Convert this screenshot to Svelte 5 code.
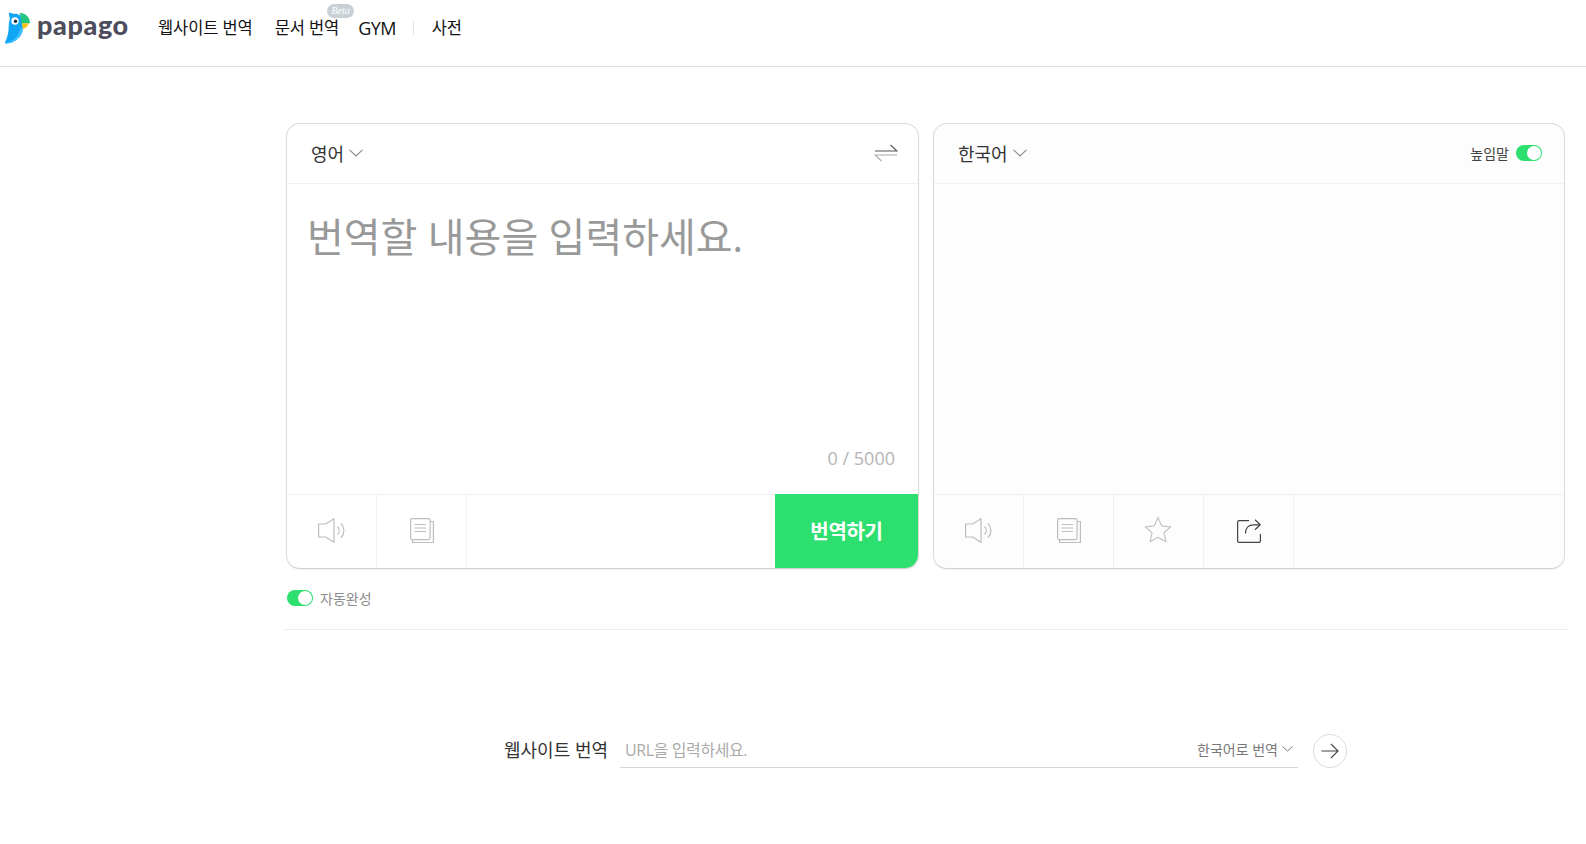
<script>
  const leftTools = ['speaker', 'copy'];
</script>

{#snippet speaker()}
  <svg class="icon" width="29" height="25" viewBox="0 0 29 25" fill="none" stroke="#bdbdbd" stroke-width="1.200">
    <path d="M1.600 6h6.900l8.500-5.200v23.400l-8.500-5.200H1.600z" stroke-linejoin="round"/>
    <path d="M20.500 8.500c2.200 2.300 2.200 5.700 0 8"/>
    <path d="M24 5.500c3.900 3.900 3.900 10.100 0 14"/>
  </svg>
{/snippet}

{#snippet copy()}
  <svg class="icon" width="24" height="25" viewBox="0 0 24 25" fill="none" stroke="#bdbdbd" stroke-width="1.200">
    <rect x=".6" y=".6" width="19.500" height="21" rx="1.500"/>
    <path d="M20.100 3.500h3.300v21H2.500v-2.900"/>
    <path d="M4.500 6.500h11.500M4.500 10h11.500M4.500 13.500h11.500"/>
  </svg>
{/snippet}

<div class="page">
  <header class="top">
    <div class="logo">
      <svg width="26" height="32" viewBox="0 0 26 32">
        <path d="M4 .5c2.500 1 4 1.300 6 1.300 4 0 7 2.500 7 7.200l1 6c0 7.500-5 14.500-14.500 16.300-1.500.3-3 .2-4-.3C2 27 3.600 21 3.700 15 3.800 11 4.300 8.500 5 6.500 4 4.500 3.800 2.500 4 .5z" fill="#10a5f5"/>
        <path d="M1 30.500c7-1 12-5.500 13.500-11.500.8-3 1.500-3.500 3.500-4 0 7.500-5 14.500-14.500 16.300-1 .2-1.800.1-2.500-.8z" fill="#3fc1ff"/>
        <circle cx="10" cy="9" r="3.700" fill="#fff"/>
        <circle cx="10.500" cy="9.200" r="1.700" fill="#1c2b39"/>
        <path d="M14.500 1c6-.3 10.500 4.300 10.500 10.200l-8.500.5C16.500 8 15.800 4 14.500 1z" fill="#22c67c"/>
        <path d="M16.500 11.500l7.200-.3c-.3 2.500-2.500 4.800-5.700 5.800-.3-2-.8-3.800-1.500-5.500z" fill="#fcc419"/>
      </svg>
      <span class="word">papago</span>
    </div>
    <nav class="nav">
      <span>웹사이트 번역</span>
      <span class="doc">문서 번역<i class="beta">Beta</i></span>
      <span class="gym">GYM</span>
      <b class="sep"></b>
      <span>사전</span>
    </nav>
  </header>

  <main class="main">
    <div class="cards">
      <section class="card">
        <div class="head">
          <div class="lang">영어
            <svg width="14" height="8" viewBox="0 0 14 8" fill="none" stroke="#8a8a8a" stroke-width="1.100"><path d="M.5.800 7 7 13.500.800"/></svg>
          </div>
          <svg width="24" height="18" viewBox="0 0 24 18" fill="none" stroke-width="1.100">
            <path d="M1 7h22L16.500 1" stroke="#555"/>
            <path d="M23 11H1l6.500 6" stroke="#aaa"/>
          </svg>
        </div>
        <div class="body">
          <div class="placeholder">번역할 내용을 입력하세요.</div>
          <div class="count">0 / 5000</div>
        </div>
        <div class="foot">
          {#each leftTools as t}
            <div class="tool">
              {#if t === 'speaker'}{@render speaker()}{:else}{@render copy()}{/if}
            </div>
          {/each}
          <button class="go">번역하기</button>
        </div>
      </section>

      <section class="card tint">
        <div class="head">
          <div class="lang">한국어
            <svg width="14" height="8" viewBox="0 0 14 8" fill="none" stroke="#8a8a8a" stroke-width="1.100"><path d="M.5.800 7 7 13.500.800"/></svg>
          </div>
          <div class="honor"><span>높임말</span><span class="toggle"></span></div>
        </div>
        <div class="body"></div>
        <div class="foot">
          <div class="tool">{@render speaker()}</div>
          <div class="tool">{@render copy()}</div>
          <div class="tool">
            <svg class="star" width="28" height="28" viewBox="0 0 28 28" fill="none" stroke="#c4c4c4" stroke-width="1.200">
              <path d="M14 1.500l3.700 8.300 9 1-6.700 6 1.900 8.900L14 21.200 6.100 25.700 8 16.800l-6.700-6 9-1z" stroke-linejoin="round"/>
            </svg>
          </div>
          <div class="tool">
            <svg class="icon" width="24" height="24" viewBox="0 0 24 24" fill="none" stroke="#444" stroke-width="1.200">
              <path d="M12 1.600H2A1.500 1.500 0 0 0 .6 3v19A1.500 1.500 0 0 0 2 23.400h20a1.500 1.500 0 0 0 1.400-1.400v-7"/>
              <path d="M18 .8l5.200 5-5.200 5" stroke-linejoin="round"/>
              <path d="M23 5.800h-6.500C11.500 5.800 8.500 9 8.500 14.500"/>
            </svg>
          </div>
        </div>
      </section>
    </div>

    <div class="auto"><span class="toggle"></span><span>자동완성</span></div>
    <div class="rule"></div>

    <div class="site">
      <span class="site-label">웹사이트 번역</span>
      <div class="url">
        <span class="url-ph">URL을 입력하세요.</span>
        <span class="url-lang">한국어로 번역
          <svg width="11" height="6" viewBox="0 0 11 6" fill="none" stroke="#777"><path d="M.5.500 5.500 5l5-4.500"/></svg>
        </span>
      </div>
      <div class="arrow">
        <svg width="18" height="16" viewBox="0 0 18 16" fill="none" stroke="#444" stroke-width="1.100"><path d="M.5 8h16.500M10 1l7 7-7 7"/></svg>
      </div>
    </div>
  </main>
</div>

<style>
  :global(body) {
    margin: 0;
    background: #fff;
  }
  .page {
    font-family: "Open Sans", "Noto Sans CJK KR", sans-serif;
    color: #222;
    width: 1586px;
    height: 844px;
    overflow: hidden;
  }
  .top {
    display: flex;
    align-items: flex-start;
    height: 66px;
    border-bottom: 1px solid #dedede;
  }
  .logo {
    display: flex;
    align-items: center;
    gap: 6px;
    margin: 12px 0 0 5px;
    height: 32px;
    width: 153px;
  }
  .word {
    font-family: "Lato", sans-serif;
    font-weight: 900;
    font-size: 27px;
    letter-spacing: 0.6px;
    color: #4d4d5c;
    line-height: 30px;
    margin-top: -6px;
  }
  .nav {
    display: flex;
    align-items: center;
    gap: 22px;
    height: 28px;
    margin-top: 13px;
    font-size: 16.500px;
    letter-spacing: -0.1px;
    color: #111;
  }
  .doc {
    position: relative;
  }
  .beta {
    position: absolute;
    top: -11px;
    right: -15px;
    width: 27px;
    height: 14px;
    border-radius: 7px;
    background: #c9d1d6;
    color: #fff;
    font: italic 10px/14px "Liberation Serif", serif;
    text-align: center;
    letter-spacing: 0;
  }
  .gym {
    margin-left: -3px;
    margin-top: 2px;
    font-size: 18px;
    letter-spacing: -0.6px;
  }
  .sep {
    width: 1px;
    height: 14px;
    background: #e4e4e4;
    margin: 2px -4px 0 -5px;
  }
  .main {
    padding: 56px 0 0 286px;
  }
  .cards {
    display: flex;
    gap: 14px;
  }
  .card {
    width: 633px;
    height: 446px;
    box-sizing: border-box;
    border: 1px solid #dcdcdc;
    border-bottom-color: #d2d2d2;
    border-radius: 14px;
    background: #fff;
    display: flex;
    flex-direction: column;
    overflow: hidden;
    box-shadow: 0 1px 2px rgba(0, 0, 0, 0.06);
  }
  .card.tint {
    width: 632px;
    background: #fdfdfd;
  }
  .head {
    height: 60px;
    flex: none;
    box-sizing: border-box;
    border-bottom: 1px solid #f0f0f0;
    display: flex;
    align-items: center;
    justify-content: space-between;
    padding: 0 20px 2px 24px;
  }
  .lang {
    display: flex;
    align-items: center;
    gap: 5px;
    font-size: 18px;
    color: #333;
  }
  .honor {
    display: flex;
    align-items: center;
    gap: 7px;
    font-size: 14px;
    color: #444;
    padding-right: 2px;
  }
  .toggle {
    position: relative;
    display: inline-block;
    width: 26px;
    height: 16px;
    border-radius: 8px;
    background: #2ddf6f;
  }
  .toggle::after {
    content: "";
    position: absolute;
    right: 1px;
    top: 1px;
    width: 14px;
    height: 14px;
    border-radius: 50%;
    background: #fff;
  }
  .body {
    flex: 1;
    position: relative;
  }
  .placeholder {
    padding: 22px 0 0 20px;
    font-size: 40px;
    line-height: 62px;
    font-weight: 400;
    letter-spacing: 0;
    color: #999;
  }
  .count {
    position: absolute;
    right: 23px;
    bottom: 24px;
    font-size: 18px;
    line-height: 24px;
    color: #b5b5b5;
  }
  .foot {
    height: 74px;
    flex: none;
    box-sizing: border-box;
    border-top: 1px solid #f0f0f0;
    display: flex;
  }
  .tool {
    width: 90px;
    box-sizing: border-box;
    border-right: 1px solid #f0f0f0;
    padding-bottom: 2px;
    display: flex;
    align-items: center;
    justify-content: center;
  }
  .star {
    margin: -2px 2px 0 0;
  }
  .go {
    margin: -1px 0 0 auto;
    width: 143px;
    border: 0;
    background: #2ddf6f;
    color: #fff;
    font-family: inherit;
    font-size: 20px;
    font-weight: 700;
    letter-spacing: -0.3px;
    padding: 0 0 2px;
  }
  .auto {
    display: flex;
    align-items: center;
    gap: 7px;
    margin: 20px 0 0 1px;
    height: 18px;
    font-size: 14px;
    color: #8c8c8c;
  }
  .rule {
    height: 1px;
    background: #eee;
    margin: 22px 18px 0 -3px;
  }
  .site {
    display: flex;
    align-items: center;
    margin: 101px 0 0 218px;
    height: 36px;
  }
  .site-label {
    font-size: 18px;
    color: #333;
    width: 116px;
  }
  .url {
    width: 678px;
    height: 36px;
    box-sizing: border-box;
    border-bottom: 1px solid #d6d6d6;
    display: flex;
    align-items: center;
    justify-content: space-between;
    padding: 0 5px 0 5px;
    margin-top: 1px;
  }
  .url-ph {
    font-size: 16px;
    color: #aaa;
    letter-spacing: -0.4px;
  }
  .url-lang {
    display: flex;
    align-items: center;
    gap: 4px;
    font-size: 14px;
    color: #777;
  }
  .arrow {
    width: 34px;
    height: 34px;
    box-sizing: border-box;
    border: 1px solid #dcdcdc;
    border-radius: 50%;
    margin: 4px 0 0 15px;
    display: flex;
    align-items: center;
    justify-content: center;
  }
</style>
